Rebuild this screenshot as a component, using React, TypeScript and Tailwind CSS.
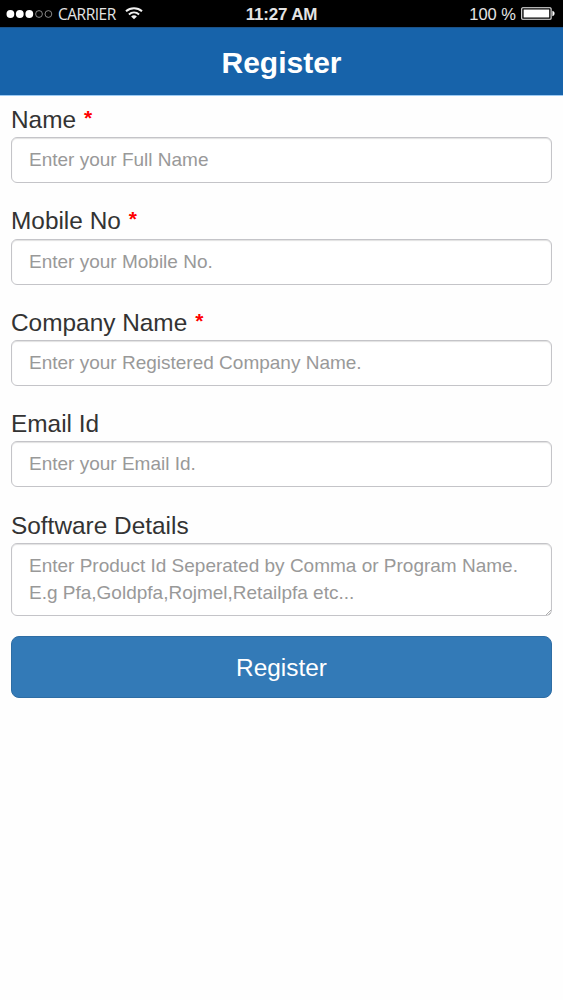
import { useState } from 'react';

type Field = {
  name: string;
  label: string;
  placeholder: string;
  required?: boolean;
};

const fields: Field[] = [
  { name: 'name', label: 'Name', placeholder: 'Enter your Full Name', required: true },
  { name: 'mobile', label: 'Mobile No', placeholder: 'Enter your Mobile No.', required: true },
  {
    name: 'company',
    label: 'Company Name',
    placeholder: 'Enter your Registered Company Name.',
    required: true,
  },
  { name: 'email', label: 'Email Id', placeholder: 'Enter your Email Id.' },
];

const controlClass =
  'block w-full rounded-[6px] border border-[#c4c4c8] bg-white px-[17px] text-[19px] text-[#555] shadow-[inset_0_1px_1px_rgba(0,0,0,0.12)] outline-none placeholder:text-[#999]';

function StatusBar() {
  return (
    <div className="grid h-[27px] grid-cols-3 items-center bg-black text-[#e4e4e4]">
      <div className="flex items-center pl-[6px]">
        <svg width="48" height="12" viewBox="0 0 48 12" fill="none">
          <circle cx="4.4" cy="6" r="3.9" fill="#fff" />
          <circle cx="13.8" cy="6" r="3.9" fill="#fff" />
          <circle cx="23.3" cy="6" r="3.9" fill="#fff" />
          <circle cx="33" cy="6" r="3.4" stroke="#aaa" strokeWidth="0.8" />
          <circle cx="42.4" cy="6" r="3.4" stroke="#aaa" strokeWidth="0.8" />
        </svg>
        <span className="ml-[4px] pt-[2px] font-['Open_Sans',sans-serif] text-[15.5px] leading-[25px] tracking-[-0.5px]">
          CARRIER
        </span>
        <svg className="mb-[1px] ml-[9px]" width="18" height="14" viewBox="0 0 18 14" fill="none">
          <path d="M1 5.2C5.6 1.1 12.4 1.1 17 5.2" stroke="#f2f2f2" strokeWidth="2" />
          <path d="M3.9 8.4C6.9 5.8 11.1 5.8 14.1 8.4" stroke="#f2f2f2" strokeWidth="2" />
          <path d="M9 13.2L6.1 10.4C7.8 8.9 10.2 8.9 11.9 10.4Z" fill="#f2f2f2" />
        </svg>
      </div>
      <span className="pt-[2px] text-center text-[17px] leading-[25px] font-bold tracking-[-0.2px]">
        11:27 AM
      </span>
      <div className="flex items-center justify-end pr-[8px]">
        <span className="pt-[1px] text-[16.5px] leading-[26px]">100 %</span>
        <svg className="ml-[5px]" width="34" height="13" viewBox="0 0 34 13" fill="none">
          <rect x="0.7" y="0.7" width="29.4" height="11.6" rx="1" stroke="#eee" strokeWidth="1.1" />
          <rect x="2.6" y="2.5" width="25.6" height="8" fill="#fff" />
          <path d="M31.4 3.8C34.3 4.5 34.3 8.5 31.4 9.2Z" fill="#fff" />
        </svg>
      </div>
    </div>
  );
}

export default function App() {
  const [values, setValues] = useState<Record<string, string>>({});
  const update = (name: string, value: string) => setValues({ ...values, [name]: value });

  return (
    <div className="min-h-screen bg-[#fefefe] font-['Liberation_Sans',Arial,sans-serif] text-[#333]">
      <StatusBar />
      <header className="flex h-[69px] items-center justify-center border-t border-b border-t-[#1b5288] border-b-[#9ccaf3] bg-[#1763aa]">
        <h1 className="pt-[2px] text-[30px] leading-none font-bold text-white">Register</h1>
      </header>
      <form className="px-[11px] pt-[7px]" onSubmit={(e) => e.preventDefault()}>
        {fields.map(({ name, label, placeholder, required }) => (
          <div key={name} className="h-[101.4px]">
            <label htmlFor={name} className="block h-[34.2px] text-[24.4px] leading-[34px]">
              {label}
              {required && (
                <span className="ml-[8px] align-[3px] text-[21px] leading-none font-bold text-[#f00]">*</span>
              )}
            </label>
            <input
              id={name}
              className={`${controlClass} h-[46px]`}
              placeholder={placeholder}
              value={values[name] ?? ''}
              onChange={(e) => update(name, e.target.value)}
            />
          </div>
        ))}
        <label htmlFor="details" className="block h-[34.2px] text-[24.4px] leading-[33px]">
          Software Details
        </label>
        <div className="relative">
          <textarea
            id="details"
            className={`${controlClass} h-[73px] resize-none overflow-hidden pt-[8px] leading-[27px]`}
            placeholder={'Enter Product Id Seperated by Comma or Program Name.\nE.g Pfa,Goldpfa,Rojmel,Retailpfa etc...'}
            value={values.details ?? ''}
            onChange={(e) => update('details', e.target.value)}
          />
          <svg className="absolute right-[1px] bottom-[1px]" width="5" height="5" viewBox="0 0 5 5">
            <path d="M0 5L5 0M2.5 5L5 2.5" stroke="#999" strokeWidth="0.8" />
          </svg>
        </div>
        <button
          type="submit"
          className="mt-[20.5px] h-[62px] w-full rounded-[8px] border border-[#2e6da4] bg-[#337ab7] pt-[2px] text-[24.4px] text-white"
        >
          Register
        </button>
      </form>
    </div>
  );
}
